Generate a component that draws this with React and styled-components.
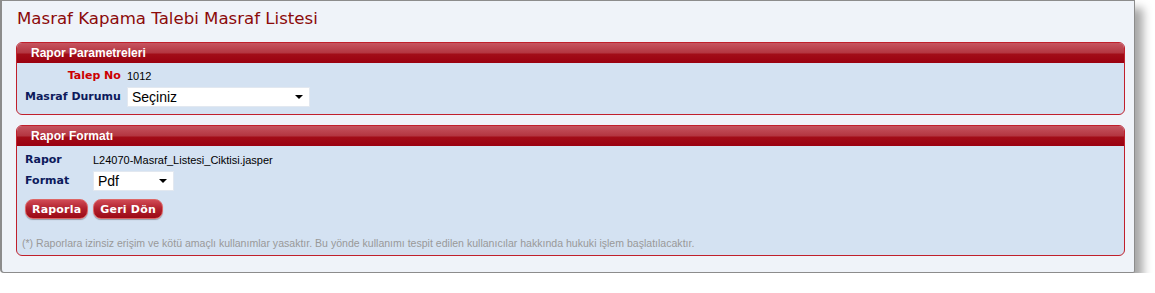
import React from "react";
import styled, { createGlobalStyle } from "styled-components";

const GlobalStyle = createGlobalStyle`
  body {
    margin: 0;
    background: #ffffff;
    font-family: "Liberation Sans", Arial, sans-serif;
  }
`;

const Window = styled.div`
  box-sizing: border-box;
  width: 1135px;
  height: 273px;
  background: #eff3f9;
  border: 1px solid #8c8c8c;
  border-left-width: 2px;
  border-radius: 0 0 2px 4px;
  box-shadow: 8px 8px 10px rgba(0, 0, 0, 0.35);
  padding: 8px 9px 0 14px;
`;

const Title = styled.h1`
  margin: 0 0 13px 1px;
  font-family: "DejaVu Sans", Verdana, sans-serif;
  font-weight: normal;
  font-size: 16.6px;
  line-height: 20px;
  color: #8b0a0a;
`;

const Panel = styled.section`
  border: 1px solid #c0202c;
  border-radius: 6px;
  background: #d4e2f2;
  overflow: hidden;
  margin-bottom: 10px;
`;

const PanelHead = styled.div`
  height: 20px;
  line-height: 21px;
  padding-left: 14px;
  color: #ffffff;
  font-weight: bold;
  font-size: 12px;
  background: linear-gradient(#c65560, #b33540 50%, #a20d18 55%, #9a0010);
`;

const PanelBody = styled.div`
  padding: ${(p) => p.$pad};
`;

const FieldGrid = styled.div`
  display: grid;
  grid-template-columns: ${(p) => p.$cols};
  column-gap: ${(p) => p.$gap};
  row-gap: ${(p) => p.$rowGap};
  align-items: center;
`;

const Label = styled.span`
  font-family: "DejaVu Sans", Verdana, sans-serif;
  font-weight: bold;
  font-size: 11px;
  line-height: 14px;
  color: ${(p) => (p.$red ? "#cc0000" : "#0d1a5c")};
  justify-self: ${(p) => (p.$right ? "end" : "start")};
`;

const Value = styled.span`
  font-size: 11px;
  line-height: 14px;
  color: #000;
`;

const Select = styled.div`
  box-sizing: border-box;
  width: ${(p) => p.$w}px;
  height: 20px;
  background: #fff;
  border: 1px solid #e2e8f0;
  display: flex;
  align-items: center;
  justify-content: space-between;
  padding: 0 6px 0 4px;
  font-size: 14px;
  color: #000;
`;

const Arrow = styled.span`
  width: 0;
  height: 0;
  border-left: 4px solid transparent;
  border-right: 4px solid transparent;
  border-top: 4px solid #000;
`;

const Buttons = styled.div`
  display: flex;
  gap: 5px;
  margin-top: 8px;
`;

const Button = styled.button`
  height: 20px;
  padding: 0 6px;
  border: 1px solid #d66;
  border-radius: 8px;
  background: linear-gradient(#d04a55, #b0202c 50%, #9c0a16);
  color: #fff;
  font-family: "DejaVu Sans", Verdana, sans-serif;
  font-weight: bold;
  font-size: 11px;
  letter-spacing: 0.2px;
  box-shadow: 0 1px 1px rgba(0, 0, 0, 0.3);
`;

const Note = styled.p`
  margin: 18px 0 0 -3px;
  font-size: 10.55px;
  line-height: 13px;
  color: #999;
`;

export default function App() {
  return (
    <>
      <GlobalStyle />
      <Window>
        <Title>Masraf Kapama Talebi Masraf Listesi</Title>
        <Panel>
          <PanelHead>Rapor Parametreleri</PanelHead>
          <PanelBody $pad="6px 0 7px 8px">
            <FieldGrid $cols="auto 1fr" $gap="6px" $rowGap="4px">
              <Label $red $right>Talep No</Label>
              <Value>1012</Value>
              <Label $right>Masraf Durumu</Label>
              <Select $w={183}>
                Seçiniz
                <Arrow />
              </Select>
            </FieldGrid>
          </PanelBody>
        </Panel>
        <Panel>
          <PanelHead>Rapor Formatı</PanelHead>
          <PanelBody $pad="7px 0 5px 8px">
            <FieldGrid $cols="68px 1fr" $gap="0px" $rowGap="4px">
              <Label>Rapor</Label>
              <Value>L24070-Masraf_Listesi_Ciktisi.jasper</Value>
              <Label>Format</Label>
              <Select $w={81}>
                Pdf
                <Arrow />
              </Select>
            </FieldGrid>
            <Buttons>
              <Button>Raporla</Button>
              <Button>Geri Dön</Button>
            </Buttons>
            <Note>
              (*) Raporlara izinsiz erişim ve kötü amaçlı kullanımlar yasaktır. Bu yönde kullanımı tespit edilen kullanıcılar hakkında hukuki işlem başlatılacaktır.
            </Note>
          </PanelBody>
        </Panel>
      </Window>
    </>
  );
}
